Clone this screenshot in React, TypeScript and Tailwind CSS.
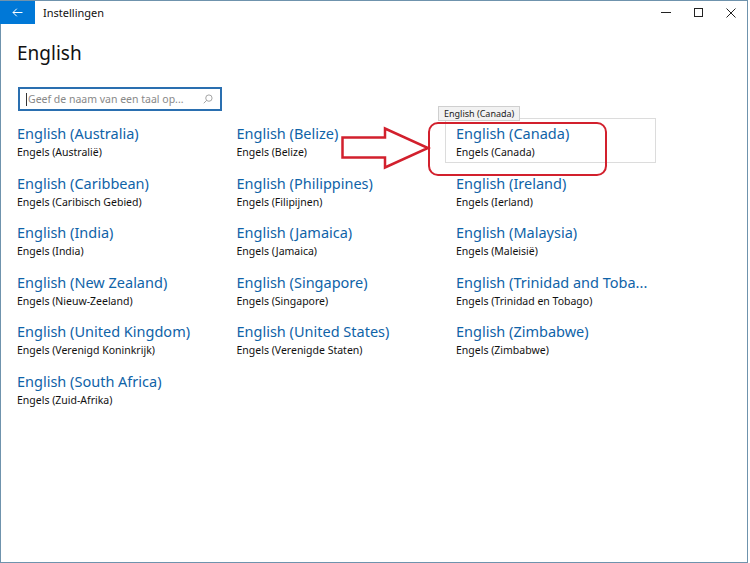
import React from "react";

const items: [string, string][] = [
  ["English (Australia)", "Engels (Australië)"],
  ["English (Belize)", "Engels (Belize)"],
  ["English (Canada)", "Engels (Canada)"],
  ["English (Caribbean)", "Engels (Caribisch Gebied)"],
  ["English (Philippines)", "Engels (Filipijnen)"],
  ["English (Ireland)", "Engels (Ierland)"],
  ["English (India)", "Engels (India)"],
  ["English (Jamaica)", "Engels (Jamaica)"],
  ["English (Malaysia)", "Engels (Maleisië)"],
  ["English (New Zealand)", "Engels (Nieuw-Zeeland)"],
  ["English (Singapore)", "Engels (Singapore)"],
  ["English (Trinidad and Toba...", "Engels (Trinidad en Tobago)"],
  ["English (United Kingdom)", "Engels (Verenigd Koninkrijk)"],
  ["English (United States)", "Engels (Verenigde Staten)"],
  ["English (Zimbabwe)", "Engels (Zimbabwe)"],
  ["English (South Africa)", "Engels (Zuid-Afrika)"],
];

export default function App() {
  return (
    <div
      className="relative w-[750px] h-[563px] bg-white overflow-hidden"
      style={{ fontFamily: '"Noto Sans", "Open Sans", sans-serif' }}
    >
      <div className="w-[748px] h-[563px] border-x border-b border-t border-[#6f93ad] flex flex-col">
        {/* title bar */}
        <div className="h-[23px] flex items-center shrink-0">
          <div className="w-[35px] h-[23px] bg-[#0078d7] flex items-center justify-center -mt-px -ml-px">
            <svg width="11" height="9" viewBox="0 0 11 9" fill="none">
              <path d="M10.5 4.5H1M4.8 0.7L1 4.5l3.8 3.8" stroke="white" strokeWidth="1" />
            </svg>
          </div>
          <span className="ml-[8px] text-[11px] text-[#111] leading-none">Instellingen</span>
          <div className="ml-auto flex items-center h-full">
            <div className="w-[33px] flex justify-center">
              <div className="w-[10px] h-px bg-[#222]" />
            </div>
            <div className="w-[32px] flex justify-center">
              <div className="w-[9px] h-[9px] border border-[#222]" />
            </div>
            <div className="w-[33px] flex justify-center">
              <svg width="10" height="10" viewBox="0 0 10 10">
                <path d="M0.5 0.5L9.5 9.5M9.5 0.5L0.5 9.5" stroke="#222" strokeWidth="1" />
              </svg>
            </div>
          </div>
        </div>

        <div className="pl-[16px] pt-[17px]">
          <h1 className="text-[19px] leading-[25px] text-[#111] font-normal">English</h1>
        </div>

        <div className="pl-[17px] pt-[21px]">
          <div className="w-[204px] h-[24px] border-2 border-[#2a6fb0] flex items-center pl-[6px] pr-[7px]">
            <div className="w-px h-[13px] bg-[#333]" />
            <span className="text-[10.5px] text-[#888] ml-px leading-none">Geef de naam van een taal op...</span>
            <svg className="ml-auto" width="10" height="10" viewBox="0 0 11 11" fill="none">
              <circle cx="6.5" cy="4.5" r="3.5" stroke="#9a9a9a" strokeWidth="1" />
              <path d="M4 7L0.8 10.2" stroke="#9a9a9a" strokeWidth="1" />
            </svg>
          </div>
        </div>

        <div className="pl-[5px] pt-[7px] grid grid-cols-[211px_211px_211px] gap-x-[8.5px] gap-y-[4.5px]">
          {items.map(([t, s], i) => (
            <div
              key={i}
              className={
                "h-[45px] pl-[10px] pt-[4px] border " +
                (i === 2 ? "border-[#dcdcdc]" : "border-transparent")
              }
            >
              <div className="text-[14.5px] leading-[20px] text-[#0f63a8] whitespace-nowrap">{t}</div>
              <div className="text-[10.5px] leading-[16px] mt-px text-[#111] whitespace-nowrap">{s}</div>
            </div>
          ))}
        </div>
      </div>

      {/* tooltip */}
      <div className="absolute left-[438px] top-[106px] h-[15px] px-[5px] bg-[#f2f2f2] border border-[#cfcfcf] text-[9px] leading-[13px] text-[#222]">
        English (Canada)
      </div>

      {/* red highlight */}
      <div className="absolute left-[428px] top-[122px] w-[179px] h-[54px] border-[2.5px] border-[#d2202d] rounded-[10px]" />

      {/* arrow */}
      <svg className="absolute left-[340px] top-[126px]" width="92" height="46" viewBox="0 0 92 46">
        <path
          d="M2.5 11.5H45V2.5L88 22L45 41.5V31.5H2.5Z"
          fill="none"
          stroke="#d2202d"
          strokeWidth="2.5"
          strokeLinejoin="miter"
        />
      </svg>
    </div>
  );
}
